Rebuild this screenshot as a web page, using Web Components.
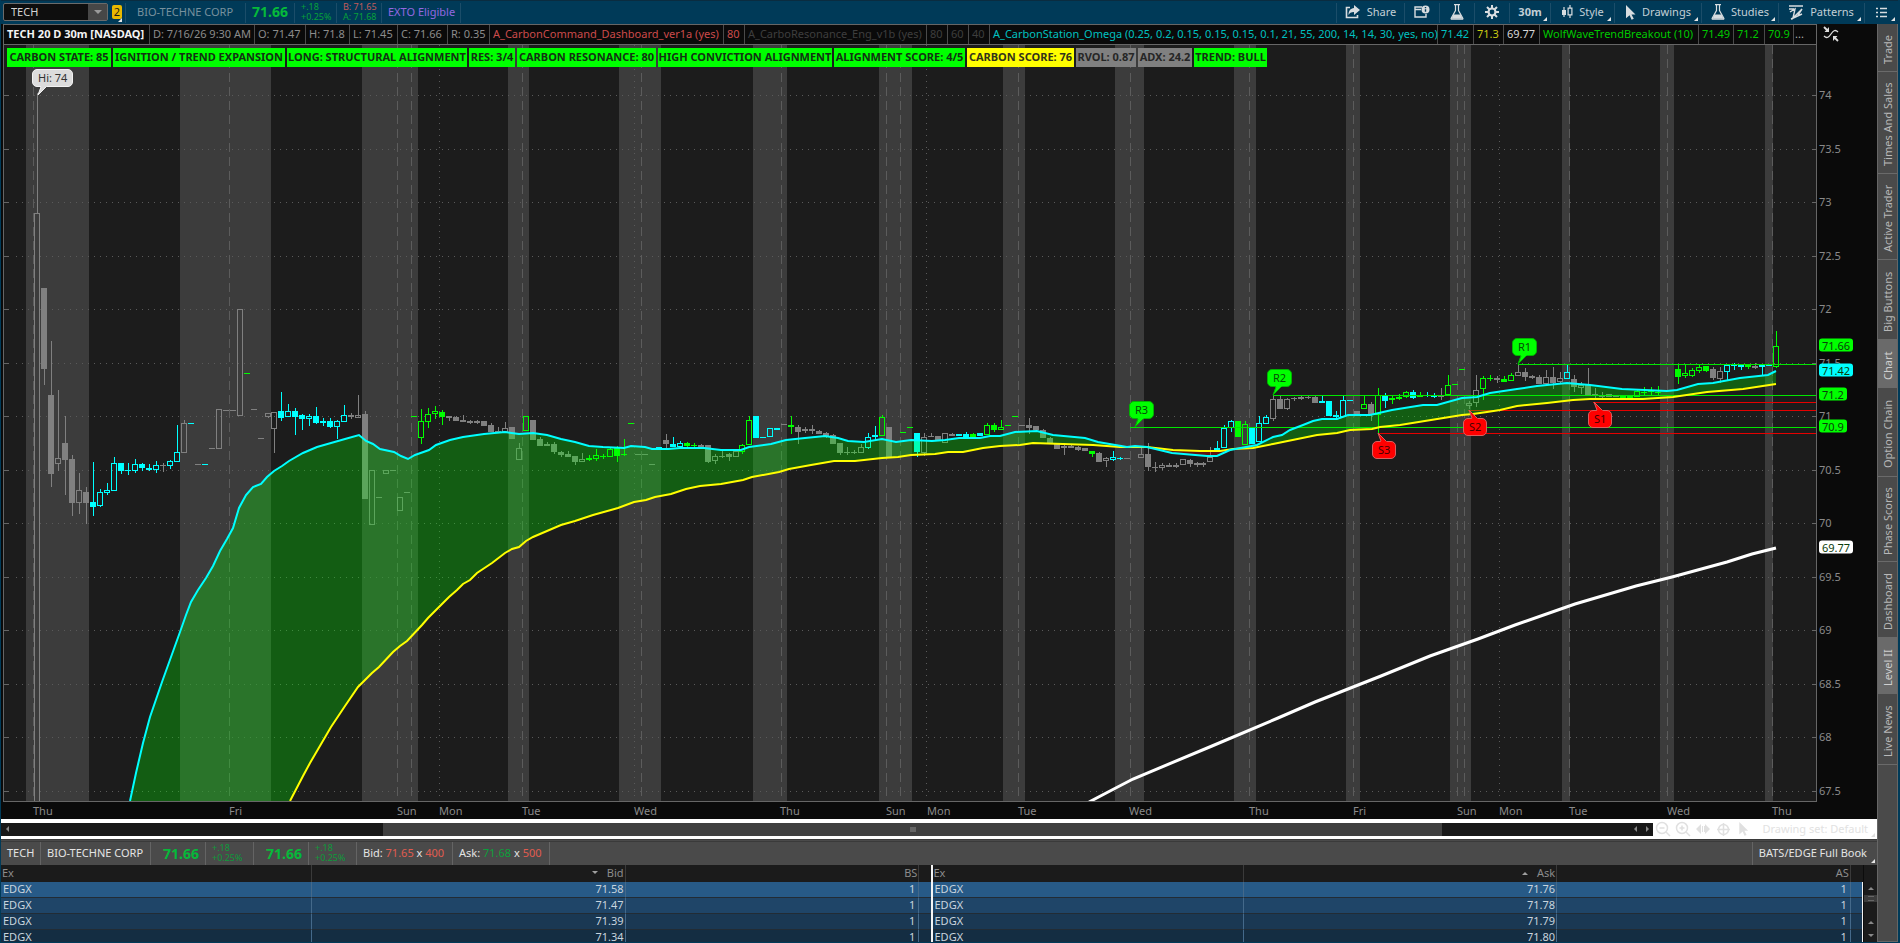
<!DOCTYPE html>
<html lang="en">
<head>
<meta charset="utf-8">
<title>TECH 20 D 30m</title>
<style>
  html, body { margin: 0; height: 100%; background: #003a58; }
  body { font: 11px/14px "Noto Sans", "Open Sans", sans-serif; color: #c8c8c8; overflow: hidden; }
</style>
</head>
<body>
<trade-app></trade-app>

<script>
const BASE = `
  *, *::before, *::after { box-sizing: border-box; }
  button, input { font: inherit; color: inherit; background: none; border: 0; margin: 0; padding: 0; }
  a { color: inherit; text-decoration: none; }
`;
function component(name, css, html) {
  customElements.define(name, class extends HTMLElement {
    connectedCallback() {
      if (this.shadowRoot) return;
      const root = this.attachShadow({ mode: 'open' });
      const t = document.createElement('template');
      t.innerHTML = `<style>${BASE}${css}</style>${typeof html === 'function' ? html(this) : html}`;
      root.append(t.content.cloneNode(true));
    }
  });
}

/* ---------- icons ---------- */
const ICONS = {
  share: `<svg width="16" height="14" viewBox="0 0 16 14"><path d="M9 0l6 5-6 5V7C6 7 4.500 8 3.500 10 3.500 6 5.500 3.300 9 3z" fill="#d8dde0"/><path d="M5 2.500H1.500v10h11V10" fill="none" stroke="#d8dde0" stroke-width="1.600"/></svg>`,
  alert: `<svg width="16" height="14" viewBox="0 0 16 14"><path d="M8 2H1v10h11V9M1 4.500h6" fill="none" stroke="#d8dde0" stroke-width="1.400"/><circle cx="11.500" cy="4.500" r="4" fill="#d8dde0"/><path d="M11.500 2v1.300M11.500 4.200v2.600" stroke="#003a58" stroke-width="1.400"/></svg>`,
  flask: `<svg width="14" height="16" viewBox="0 0 14 16"><path d="M4 .700h6M5.500 1v5.500L1.200 14.200q-.400 1 .6 1h10.400q1 0 .6-1L8.500 6.500V1" fill="none" stroke="#d8dde0" stroke-width="1.200"/><path d="M3.500 10.500h7l2 4.200h-11z" fill="#d8dde0"/></svg>`,
  gear: `<svg width="14" height="14" viewBox="0 0 14 14"><g stroke="#d8dde0" stroke-width="2"><path d="M7 0v14M0 7h14M2 2l10 10M12 2L2 12"/></g><circle cx="7" cy="7" r="4.500" fill="#d8dde0"/><circle cx="7" cy="7" r="2.400" fill="#003a58"/></svg>`,
  candles: `<svg width="12" height="14" viewBox="0 0 12 14"><path d="M3 2v10M9 0v3M9 10v3" stroke="#d8dde0" stroke-width="1.200"/><path d="M1 5h4v5H1z" fill="#d8dde0"/><path d="M7.100 3.100h3.800v6.800H7.100z" fill="none" stroke="#d8dde0" stroke-width="1.200"/></svg>`,
  arrow: `<svg width="11" height="15" viewBox="0 0 11 15"><path d="M1 0l9.500 9.500H6.500l2.300 4.300-2.200 1-2-4.500L1 13.300z" fill="#d8dde0"/></svg>`,
  pattern: `<svg width="15" height="15" viewBox="0 0 15 15"><path d="M0 1h14M0 4h5M1 7l5-3-2 9 9-9-4 6M2 14L13 9" fill="none" stroke="#d8dde0" stroke-width="1.400"/></svg>`,
  list: `<svg width="11" height="11" viewBox="0 0 11 11"><path d="M0 1.500h2M0 5.500h2M0 9.500h2M4 1.500h7M4 5.500h7M4 9.500h7" stroke="#d8dde0" stroke-width="1.600"/></svg>`
};

/* ---------- top bar ---------- */
component('tool-item', `
  :host { display: flex; position: relative; border-left: 1px solid #1b4d69; }
  button { display: flex; align-items: center; justify-content: center; gap: 6px; width: 100%; padding-bottom: 2px; color: #c3cfd6; }
  :host([bold]) button { font-weight: bold; }
  :host([menu])::after { content: ""; position: absolute; right: 3px; bottom: 2px; border: 2px solid; border-color: transparent #e6e6e6 #e6e6e6 transparent; }
`, el => `<button aria-label="${el.getAttribute('label')}">${ICONS[el.getAttribute('icon')] || ''}<slot></slot></button>`);

component('symbol-bar', `
  :host { display: flex; align-items: stretch; flex: none; height: 24px; padding: 2px 0 1px 2px; background: #003a58; border-top: 1px solid #0a2c40; box-sizing: border-box; }
  .symbol { display: flex; width: 105px; height: 18px; border: 1px solid #6b6b6b; border-radius: 2px; background: #0e0e0e; }
  input { flex: 1; min-width: 0; padding-left: 7px; color: #d4d4d4; outline: 0; }
  .drop { width: 19px; background: #474747; display: grid; place-items: center; }
  .drop i { border: 4px solid transparent; border-top-color: #9a9a9a; margin-top: 4px; }
  .link { position: relative; align-self: flex-start; width: 17px; padding: 2px 0 0 4px; border: 0; display: block; }
  .link b { display: block; width: 10px; height: 14px; border-radius: 2px; background: #e8b900; color: #1a1a1a; text-align: center; font-weight: normal; line-height: 14px; }
  .link::after { content: ""; position: absolute; right: 3px; top: 15px; border: 2px solid; border-color: transparent #e6e6e6 #e6e6e6 transparent; }
  .cell { display: flex; align-items: center; border-left: 1px solid #1b4d69; padding: 0 0 2px 6px; white-space: nowrap; }
  .name { width: 120px; padding-left: 11px; color: #77919e; }
  .last { width: 49px; font-weight: bold; font-size: 14px; color: #06b93a; }
  .stack { flex-direction: column; align-items: flex-start; justify-content: center; font-size: 9px; line-height: 10px; }
  .up { color: #08a03a; } .down { color: #c05a5a; }
  .exto { width: 80px; color: #9468e0; border-right: 1px solid #1b4d69; }
  .space { flex: 1; }
`, `
  <div class="symbol"><input aria-label="Symbol" value="TECH"><button class="drop" aria-label="Symbol list"><i></i></button></div>
  <button class="link" aria-label="Link colour"><b>2</b></button>
  <div class="cell name">BIO-TECHNE CORP</div>
  <div class="cell last">71.66</div>
  <div class="cell stack up" style="width:42px"><span>+.18</span><span>+0.25%</span></div>
  <div class="cell stack" style="width:45px"><span class="down">B: 71.65</span><span class="up">A: 71.68</span></div>
  <div class="cell exto">EXTO Eligible</div>
  <div class="space"></div>
  <tool-item icon="share" label="Share" style="width:68px">Share</tool-item>
  <tool-item icon="alert" label="Alerts" style="width:35px"></tool-item>
  <tool-item icon="flask" label="Quick study" style="width:35px"></tool-item>
  <tool-item icon="gear" label="Settings" style="width:35px"></tool-item>
  <tool-item bold menu label="30m" style="width:41px">30m</tool-item>
  <tool-item icon="candles" menu label="Style" style="width:64px">Style</tool-item>
  <tool-item icon="arrow" menu label="Drawings" style="width:87px">Drawings</tool-item>
  <tool-item icon="flask" menu label="Studies" style="width:77px">Studies</tool-item>
  <tool-item icon="pattern" menu label="Patterns" style="width:86px">Patterns</tool-item>
  <tool-item icon="list" menu label="Menu" style="width:34px"></tool-item>
`);

/* ---------- study strip ---------- */
const STUDIES = [
  ['TECH 20 D 30m [NASDAQ]', '#f4f4f4', 146], ['D: 7/16/26 9:30 AM', '#8c8c8c', 105], ['O: 71.47', '#8c8c8c', 51], ['H: 71.8', '#8c8c8c', 44],
  ['L: 71.45', '#8c8c8c', 48], ['C: 71.66', '#8c8c8c', 50], ['R: 0.35', '#8c8c8c', 42],
  ['A_CarbonCommand_Dashboard_ver1a (yes)', '#cc4b4b', 234], ['80', '#cc4b4b', 21],
  ['A_CarboResonance_Eng_v1b (yes)', '#3e3e3e', 182], ['80', '#3e3e3e', 21], ['60', '#3e3e3e', 21], ['40', '#3e3e3e', 21],
  ['A_CarbonStation_Omega (0.25, 0.2, 0.15, 0.15, 0.15, 0.1, 21, 55, 200, 14, 14, 30, yes, no)', '#00c0c0', 448],
  ['71.42', '#00c0c0', 36], ['71.3', '#c8c814', 30], ['69.77', '#d8d8d8', 36],
  ['WolfWaveTrendBreakout (10)', '#00c800', 159], ['71.49', '#00c800', 35], ['71.2', '#00c800', 31], ['70.9', '#00c800', 29], ['...', '#b0b0b0', 0]
];
component('study-strip', `
  :host { display: flex; flex: none; height: 21px; overflow: hidden; background: #0a0a0a; border-top: 1px solid #666; border-bottom: 1px solid #666; box-sizing: border-box; }
  span { flex: none; padding-left: 3px; line-height: 18px; white-space: nowrap; border-right: 1px solid #4a4a4a; }
  span:first-of-type { font-weight: bold; }
  span:last-of-type { border: 0; padding-left: 1px; }
`, () => STUDIES.map(([t, c, w]) => `<span style="color:${c};${w ? `width:${w}px` : ''}">${t}</span>`).join(''));

component('status-labels', `
  :host { display: flex; gap: 2px; }
  span { flex: none; height: 19px; line-height: 18px; text-align: center; font-weight: bold; white-space: nowrap; background: #0f0; color: #133213; }
  .y { background: #ff0; color: #33331a; } .g { background: #808080; color: #262626; }
`, () => [
  ['CARBON STATE: 85', 104], ['IGNITION / TREND EXPANSION', 172], ['LONG: STRUCTURAL ALIGNMENT', 180], ['RES: 3/4', 46], ['CARBON RESONANCE: 80', 139],
  ['HIGH CONVICTION ALIGNMENT', 174], ['ALIGNMENT SCORE: 4/5', 131], ['CARBON SCORE: 76', 107, 'y'], ['RVOL: 0.87', 60, 'g'], ['ADX: 24.2', 54, 'g'], ['TREND: BULL', 73]
].map(([t, w, k]) => `<span class="${k || ''}" style="width:${w}px">${t}</span>`).join(''));

/* ---------- chart ---------- */
const VIEW = { x: 4, y: 45, w: 1812, h: 756 };
const BANDS = [[26,89],[180,271],[362,418],[508,529],[619,661],[753,787],[879,912],[1003,1025],[1115,1144],[1234,1256],[1346,1360],[1450,1471],[1562,1570],[1660,1674],[1765,1773]];
const DASHED = [33,229,397,411,522,641,781,886,900,1018,1130,1249,1353,1457,1464,1569,1667,1772];
const DOTTED = [439,634,926,1499];
/* index, colour (g grey, c cyan, l lime), kind (h hollow, f filled, d dash), high, top, bottom, low */
const CANDLES = `
0gh 93 213 830 830|1gf 288 288 369 385|2gf 341 395 474 487|3gh 390 458 464 471|4gf 416 443 460 495|5gf 455 459 503 516|6gh 473 490 503 514|7gf 487 492 503 524
8cf 462 502 507 516|9ch 489 492 506 507|10ch 483 490 493 495|11ch 457 463 491 491|12cf 463 463 471 474|13cf 463 470 471 475|14ch 459 464 471 473|15cf 463 464 468 471|16cf 464 468 470 471|17ch 461 465 470 473|18gf 463 465 466 472|19ch 460 461 466 469|20ch 425 452 462 462|21gh 420 423 453 453
22cd 423|23gd 464|24cd 464|25gd 448|26gh 409 409 449 449|27gd 410|28gd 410|29gh 309 309 416 416|30ld 373|31gd 409|32gd 438|33gh 413 413 417 418|34gh 412 412 429 453
35cf 392 411 418 421|36ch 404 411 417 417|37cf 408 411 417 435|38cf 414 415 419 430|39ch 414 416 419 426|40cf 407 416 423 424|41cf 418 421 423 426|42cf 418 421 427 428|43ch 420 421 427 439|44ch 405 415 422 422|45gf 413 415 417 419|46gh 395 415 418 418|47gf 411 414 499 499
48gh 470 470 525 525|49gd 497|50gh 470 470 474 474|51gd 470|52gh 497 497 511 511|53gd 492|54ld 416|55lh 409 421 438 444|56lh 408 414 422 428|57lh 406 411 414 419|58lf 410 412 417 425|59gf 416 416 418 421|60gf 416 417 421 421|61gf 415 420 422 422|62gf 420 421 423 424|63gf 420 421 423 424
64gf 421 421 426 426|65gf 423 425 432 432|66gf 427 431 432 432|67gh 422 428 432 432|68gf 427 427 439 439|69gh 443 448 460 460|70lh 416 416 431 431|71gf 420 420 440 440|72gf 437 439 446 446|73gf 442 444 446 446|74gf 442 444 452 454|75gf 451 452 455 457|76gf 451 454 457 457|77gf 456 456 462 465|78gh 453 459 462 462|79lf 455 458 460 461|80lh 449 455 459 461|81lf 454 456 457 459|82lh 448 449 457 457|83lf 446 448 456 462|84lf 439 454 455 456|85ld 423|86gd 454|87gd 454|88gd 464
89cf 447 447 450 450|90gf 434 440 444 448|91cf 437 444 447 447|92ch 441 443 447 447|93lf 442 443 446 447|94lf 443 445 446 447|95gf 444 445 447 447|96gf 445 445 462 463|97gh 454 456 461 464|98gf 450 456 457 458|99gf 453 454 457 461|100gh 449 451 457 457|101lh 444 445 452 454|102lh 416 420 445 445|103cf 416 416 438 438|104cd 437|105ch 428 428 437 437|106cf 428 428 430 430|107gd 424|108lf 416 425 427 434|109gf 425 427 432 444|110gh 427 429 431 433|111gf 425 429 431 434|112gf 430 431 434 434|113gf 432 433 436 438|114gf 434 435 444 444|115gf 443 443 453 455|116gf 447 452 453 455|117gf 450 452 453 454|118gh 444 447 453 453|119ch 433 437 448 449|120cf 426 435 437 440|121lh 415 417 436 436|122gf 427 427 457 457|124ld 432|125ld 427|126cf 433 433 452 457|127gh 433 437 453 456|128gf 433 436 437 437|129gf 436 436 440 440|130gh 433 433 443 443|131gf 433 434 436 436
132cf 434 434 436 436|133cf 432 434 437 438|134lf 433 434 437 437|135cf 433 433 436 436|136lh 423 425 435 435|137lf 423 425 430 432|138lh 420 427 430 430|139ld 425|140ld 416|141gd 425|142gf 418 425 428 434|143gf 426 426 430 430|144gf 429 430 438 438|145gf 437 438 444 444|146gf 444 444 449 449|147gh 443 446 448 455|148gf 445 446 448 448|149gf 446 447 450 451|150gf 448 448 451 451|151lf 451 451 454 457|152gf 452 453 462 462|153gh 457 458 461 467|154ch 451 457 460 461|155cf 457 458 459 460|156gd 458|158gh 446 454 458 458|159gf 443 454 467 471|160gf 462 467 468 472|161gh 463 465 468 470|162gf 463 465 467 467|163gh 463 465 467 468|164gh 459 459 465 465|165gf 459 460 464 467|166gf 462 463 465 467|167gh 462 463 465 467|168gh 447 457 462 462|169ch 441 448 450 450|170ch 425 428 448 448|171ch 420 421 428 432|172lf 421 421 437 437|173lh 421 424 445 445|174cf 427 427 444 444|175ch 416 423 442 442|176ch 415 417 424 424|177gh 396 399 419 421|178gf 395 399 409 409|179gh 398 399 409 410|180gf 397 398 399 401|181gf 396 397 399 400|182gf 396 397 398 399|183gf 395 397 403 403|184cf 396 401 403 403|185cf 401 401 416 416|186cf 411 415 417 418|187ch 396 400 417 417|188cd 400|189gf 411 411 414 414|190lh 396 404 409 409|191gf 402 404 414 421
192lh 388 395 415 433|193cf 393 395 401 408|194lf 396 398 400 404|195lf 394 397 399 400|196lh 391 392 397 398|197cf 390 392 398 399|198lh 392 395 397 397|199cf 392 395 396 397|200cf 393 395 397 398|201gf 388 395 397 400|202lh 375 385 395 395|203ld 384|204ld 369|205gh 401 403 406 409|206gh 375 390 403 407|207lh 376 378 389 400|208lf 375 378 379 381|209gf 376 378 380 383|210lf 376 379 382 382|211lh 373 375 381 381|212gh 365 372 376 376|213gf 368 372 377 381|214gf 375 376 378 379|215gf 375 377 384 384|216gh 370 377 384 385|217gf 367 377 383 389|218gh 372 378 382 384|219ch 365 372 379 379|220gf 375 379 387 392|221gh 382 385 388 394|222gf 368 385 395 395|223gf 388 394 396 399|224gf 392 396 397 398|225gf 394 394 397 397|226gf 396 396 397 397|227lf 395 396 398 398|228lf 395 396 398 398|229lh 389 391 397 397|230lf 387 392 393 395|231lf 387 391 392 395|232lf 386 392 393 395|235lf 365 369 377 384|236lh 365 373 376 378|237lh 368 370 376 377|238lh 365 367 371 373|239lf 366 366 371 372|240gf 367 369 378 380|241gh 367 371 379 383|242ch 365 365 372 380|243cf 363 365 366 370|244cf 364 365 367 370|245lf 364 365 367 369|246gf 363 366 368 369|247ch 364 365 367 376|248cd 365|249lh 331 346 367 368`;
const FAST = '130,801 136,773 143,743 150,717 162,682 171,657 180,632 186,615 191,602 198,590 206,578 213,566 220,551 227,539 233,528 239,508 246,495 253,487 261,484 267,477 274,471 282,466 289,461 303,453 317,447 331,443 345,439 359,435 366,441 373,444 380,449 394,452 401,456 408,459 415,455 429,450 436,445 450,440 463,437 484,434 505,432 519,434 533,433 547,435 561,439 575,442 589,446 603,447 624,448 631,446 645,447 652,449 668,449 680,448 704,448 721,450 741,450 749,447 771,444 786,440 805,438 825,436 838,438 848,441 864,442 882,439 896,442 911,440 932,441 945,440 959,438 980,438 990,436 1000,436 1015,432 1037,431 1053,435 1085,438 1098,442 1127,447 1135,446 1147,447 1172,453 1207,456 1217,456 1230,450 1257,445 1273,437 1282,435 1290,430 1303,425 1313,421 1322,419 1337,419 1348,415 1370,415 1392,410 1423,405 1437,405 1462,398 1477,397 1490,393 1517,389 1537,386 1567,383 1590,385 1622,389 1667,391 1677,390 1698,384 1713,383 1740,378 1768,375 1776,371';
const SLOW = '290,801 303,776 310,763 317,751 331,727 345,706 358,687 372,673 379,667 393,652 400,646 407,641 422,625 428,618 441,605 449,597 457,590 463,584 470,580 477,573 492,563 505,553 512,549 519,547 526,541 533,537 547,531 561,525 575,521 593,515 618,508 634,502 646,500 655,497 671,494 686,489 700,486 721,484 743,480 752,477 779,472 789,469 811,465 834,461 855,461 882,458 898,457 911,455 935,454 948,452 963,452 983,448 1000,446 1020,445 1033,443 1093,445 1120,447 1147,447 1173,450 1200,451 1220,451 1233,449 1253,448 1273,444 1317,435 1337,433 1350,430 1372,429 1380,427 1400,425 1462,415 1473,414 1487,412 1500,410 1517,406 1547,403 1573,400 1590,399 1643,399 1673,397 1707,392 1743,389 1776,384';
const LONG = '1089,802 1110,791 1133,779 1212,746 1278,718 1315,702 1381,676 1430,656 1478,639 1515,625 1575,604 1636,586 1672,577 1727,562 1752,554 1776,548';
const LEVELS = [[1518,364,'#00e600'],[1273,395,'#00e600'],[1130,427,'#00e600'],[1593,402,'#e60000'],[1468,410,'#e60000'],[1378,433,'#e60000']];
const PRICES = [['74',95],['73.5',149],['73',202],['72.5',256],['72',309],['71.5',363],['71',416],['70.5',470],['70',523],['69.5',577],['69',630],['68.5',684],['68',737],['67.5',791]];

function plotMarkup() {
  const { x, y, w, h } = VIEW, right = x + w, bottom = y + h;
  const colours = { g: '#808080', c: '#00ffff', l: '#00ff00' };
  let s = '';
  for (const [a, b] of BANDS) s += `<rect x="${a}" y="${y}" width="${b - a}" height="${h}" fill="#3c3c3c"/>`;
  for (const [, py] of PRICES) {
    s += `<path d="M${x + 12} ${py + .5}H${right - 10}" stroke="#5a5a5a" stroke-dasharray="1 5"/>`;
    s += `<path d="M${x} ${py + .5}h5M${right - 4} ${py + .5}h4" stroke="#666"/>`;
  }
  for (const vx of DASHED) s += `<path d="M${vx + .5} ${y}V${bottom}" stroke="#5c5c5c" stroke-dasharray="9 5"/>`;
  for (const vx of DOTTED) s += `<path d="M${vx + .5} ${y}V${bottom}" stroke="#5a5a5a" stroke-dasharray="1 5"/>`;
  for (const item of CANDLES.trim().split(/[|\n]/)) {
    const [, i, c, k, rest] = item.match(/^(\d+)([gcl])([hfd]) (.*)$/);
    const cx = 37 + Math.round(i * 6.985), col = colours[c], v = rest.split(' ').map(Number);
    if (k === 'd') { s += `<rect x="${cx - 3}" y="${v[0]}" width="6" height="1" fill="${col}"/>`; continue; }
    const [hi, top, bot, lo] = v;
    if (top > hi) s += `<rect x="${cx}" y="${hi}" width="1" height="${top - hi}" fill="${col}"/>`;
    if (lo > bot) s += `<rect x="${cx}" y="${bot}" width="1" height="${lo - bot}" fill="${col}"/>`;
    s += k === 'f'
      ? `<rect x="${cx - 3}" y="${top}" width="6" height="${bot - top}" fill="${col}"/>`
      : `<rect x="${cx - 2.5}" y="${top + .5}" width="5" height="${Math.max(bot - top - 1, 1)}" fill="none" stroke="${col}"/>`;
  }
  for (const [lx, ly, c] of LEVELS) s += `<path d="M${lx} ${ly + .5}H${right}" stroke="${c}"/>`;
  const fast = FAST.split(' '), slow = SLOW.split(' ');
  const part = (list, a, b) => list.filter(p => { const n = parseFloat(p); return n >= a && n <= b; });
  const cloud = (a, b, c) => `<polygon points="${part(fast, a, b).join(' ')} ${part(slow, a, b).reverse().join(' ')}" fill="${c}" fill-opacity=".29"/>`;
  let lines = cloud(0, 1127, '#00ff00') + cloud(1147, 1233, '#ff0000') + cloud(1233, 1800, '#00ff00');
  lines += `<polyline points="${SLOW}" stroke="#ffff00" stroke-width="2" fill="none"/>`;
  lines += `<polyline points="${FAST}" stroke="#00ffff" stroke-width="2" fill="none"/>`;
  lines += `<polyline points="${LONG}" stroke="#fff" stroke-width="3" fill="none"/>`;
  return `<svg viewBox="${x} ${y} ${w} ${h}" preserveAspectRatio="none" aria-hidden="true"><g shape-rendering="crispEdges">${s}</g>${lines}</svg>`;
}

component('chart-callout', `
  :host { position: absolute; display: block; }
  .box { position: relative; height: 18px; padding: 0 5px; border-radius: 5px; white-space: nowrap; background: var(--fill); border: 1px solid var(--edge); line-height: 16px; color: var(--ink); }
  svg { position: absolute; left: 5px; top: 16px; overflow: visible; }
  :host([up]) svg { top: auto; bottom: 16px; }
`, el => `<div class="box"><slot></slot>` + (el.hasAttribute('up')
  ? `<svg width="9" height="9"><path d="M0 0L3 9H9z" fill="var(--fill)"/><path d="M3 8L0 0l8 8" fill="none" stroke="var(--edge)"/></svg>`
  : `<svg width="9" height="9"><path d="M0 9L3 0H9z" fill="var(--fill)"/><path d="M3 1L0 9l8-8" fill="none" stroke="var(--edge)"/></svg>`) + `</div>`);

const CALLOUTS = [['Hi: 74',32,69,'n'],['R1',1512,338,'r'],['R2',1267,369,'r'],['R3',1129,401,'r'],['S3',1372,441,'s'],['S2',1463,418,'s'],['S1',1588,410,'s']];
component('price-plot', `
  :host { display: block; position: relative; overflow: hidden; background: #1c1c1c; min-height: 0; }
  svg { position: absolute; inset: 0; width: 100%; height: 100%; }
  status-labels { position: relative; padding: 3px; }
  .n { --fill: #dcdcdc; --edge: #f2f2f2; --ink: #333; }
  .r { --fill: #00ff00; --edge: #00b400; --ink: #064b06; }
  .s { --fill: #ff0000; --edge: #d86060; --ink: #400; }
`, () => plotMarkup() + `<status-labels></status-labels>` + CALLOUTS.map(([t, cx, cy, k]) =>
  `<chart-callout class="${k}" ${k === 's' ? 'up' : ''} style="left:${(cx - VIEW.x) / VIEW.w * 100}%;top:${(cy - VIEW.y) / VIEW.h * 100}%">${t}</chart-callout>`).join(''));

component('price-axis', `
  :host { display: block; position: relative; background: #0a0a0a; }
  .swap { position: absolute; left: 6px; top: 2px; width: 16px; height: 16px; }
  .scale { position: absolute; inset: 21px 0 1px 0; }
  span { position: absolute; left: 2px; transform: translateY(-50%); color: #8a8a8a; }
  .tag { padding: 0 3px; line-height: 13px; border-radius: 3px; color: #0b3d0b; background: #0f0; }
`, () => `<button class="swap" aria-label="Swap scale"><svg width="16" height="16" viewBox="0 0 16 16"><path d="M1 10C4 13 6 11 8 8S12 3 15 6" fill="none" stroke="#ddd" stroke-width="1.300"/><path d="M1 1l4 4M15 15l-4-4" stroke="#ddd" stroke-width="1.800"/><path d="M6 6V1L1.500 6zM10 10v5l4.500-5z" fill="#ddd"/></svg></button><div class="scale">`
  + PRICES.map(([t, y]) => `<span style="top:${(y - VIEW.y) / VIEW.h * 100}%">${t}</span>`).join('')
  + [['71.66', 345, '#0f0'], ['71.42', 370, '#0ff'], ['71.2', 394, '#0f0'], ['70.9', 426, '#0f0'], ['69.77', 547, '#fff']].map(([t, y, c]) =>
    `<span class="tag" style="top:${(y - VIEW.y) / VIEW.h * 100}%;background:${c}">${t}</span>`).join('') + `</div>`);

component('time-axis', `
  :host { display: block; position: relative; height: 17px; background: #0a0a0a; color: #8a8a8a; }
  span { position: absolute; top: 2px; }
`, () => [['Thu',33],['Fri',229],['Sun',397],['Mon',439],['Tue',522],['Wed',634],['Thu',780],['Sun',886],['Mon',927],['Tue',1018],['Wed',1129],['Thu',1249],['Fri',1353],['Sun',1457],['Mon',1499],['Tue',1569],['Wed',1667],['Thu',1772]]
  .map(([t, x]) => `<span style="left:${(x - VIEW.x) / VIEW.w * 100}%">${t}</span>`).join(''));

component('chart-panel', `
  :host { display: grid; grid-template: minmax(0, 1fr) auto / minmax(0, 1fr) 60px; padding-left: 2px; background: #0a0a0a; min-height: 0; }
  .main { display: flex; flex-direction: column; min-height: 0; min-width: 0; border: 1px solid #666; border-top: 0; }
  price-plot { flex: 1; }
  time-axis { margin: 0 1px; }
`, `
  <div class="main"><study-strip></study-strip><price-plot></price-plot></div>
  <price-axis></price-axis>
  <time-axis></time-axis>
`);

/* ---------- scroll row ---------- */
component('chart-scroll', `
  :host { display: flex; align-items: center; flex: none; height: 20px; background: #fff; color: #e2e2e2; }
  .bar { flex: 1; display: flex; height: 13px; background: #181818; }
  .bar button { display: grid; place-items: center; flex: none; width: 12px; }
  .thumb { display: grid; place-items: center; background: #404040; width: 64.1%; margin: 0 auto 0 22.4%; }
  .thumb i { width: 6px; height: 5px; background: #666; }
  .tools { display: flex; align-items: center; width: 224px; }
  .tools button { width: 20px; height: 18px; display: grid; place-items: center; flex: none; }
  .tools .set { position: relative; display: block; flex: 1; text-align: right; padding-right: 9px; }
  .set::after { content: ""; position: absolute; right: 2px; bottom: 1px; border: 2px solid; border-color: transparent #ddd #ddd transparent; }
`, `
  <div class="bar">
    <button aria-label="Scroll left"><svg width="3" height="6"><path d="M3 0v6L0 3z" fill="#888"/></svg></button>
    <div class="thumb"><i></i></div>
    <button aria-label="Back"><svg width="3" height="6"><path d="M3 0v6L0 3z" fill="#888"/></svg></button>
    <button aria-label="Forward"><svg width="3" height="6"><path d="M0 0v6l3-3z" fill="#888"/></svg></button>
  </div>
  <div class="tools">
    <button aria-label="Zoom out"><svg width="16" height="16" fill="none" stroke="#e0e0e0" stroke-width="1.500"><circle cx="7" cy="7" r="5.500"/><path d="M11 11l4 4M4.500 7h5"/></svg></button>
    <button aria-label="Zoom in"><svg width="16" height="16" fill="none" stroke="#e0e0e0" stroke-width="1.500"><circle cx="7" cy="7" r="5.500"/><path d="M11 11l4 4M4.500 7h5M7 4.500v5"/></svg></button>
    <button aria-label="Pan"><svg width="14" height="10"><path d="M5 0v10L0 5zM9 0v10l5-5zM6 2h1v6H6zM8 2h1v6H8z" fill="#e0e0e0"/></svg></button>
    <button aria-label="Crosshair"><svg width="13" height="13" fill="none" stroke="#e0e0e0" stroke-width="1.500"><circle cx="6.500" cy="6.500" r="5"/><path d="M6.500 0v13M0 6.500h13"/></svg></button>
    <button aria-label="Pointer"><svg width="11" height="14" viewBox="0 0 11 15"><path d="M1 0l9.500 9.500H6.500l2.300 4.300-2.200 1-2-4.500L1 13.300z" fill="#e0e0e0"/></svg></button>
    <button class="set">Drawing set: Default</button>
  </div>
`);

/* ---------- quote bar ---------- */
component('quote-bar', `
  :host { display: flex; flex: none; height: 26px; box-sizing: border-box; background: #4a4a4a; border-top: 3px double #3a3a3a; color: #e4e4e4; }
  div { display: flex; align-items: center; border-right: 1px solid #646464; padding: 0 6px 2px; white-space: pre; }
  .last { width: 55px; justify-content: flex-end; padding-bottom: 0; font-weight: bold; font-size: 14px; color: #06b93a; }
  .chg { width: 48px; flex-direction: column; align-items: flex-start; justify-content: center; font-size: 9px; line-height: 10px; color: #0d9a3a; }
  .r { color: #e05c50; } .g { color: #0aa03c; }
  .space { flex: 1; border: 0; }
  button { position: relative; padding: 0 10px 2px 6px; border-left: 1px solid #646464; }
  button::after { content: ""; position: absolute; right: 2px; bottom: 2px; border: 2px solid; border-color: transparent #e6e6e6 #e6e6e6 transparent; }
`, `
  <div style="width:40px">TECH</div><div style="width:110px">BIO-TECHNE CORP</div>
  <div class="last">71.66</div><div class="chg"><span>+.18</span><span>+0.25%</span></div>
  <div class="last">71.66</div><div class="chg"><span>+.18</span><span>+0.25%</span></div>
  <div style="width:96px">Bid: <span class="r">71.65</span> x <span class="r">400</span></div>
  <div style="width:97px">Ask: <span class="g">71.68</span> x <span class="r">500</span></div>
  <div class="space"></div>
  <button>BATS/EDGE Full Book</button>
`);

/* ---------- depth tables ---------- */
component('depth-table', `
  :host { display: block; flex: 1; min-width: 0; background: #1b1b1b; }
  table { width: 100%; table-layout: fixed; border-collapse: separate; border-spacing: 0; }
  col:nth-child(1) { width: 33.5%; } col:nth-child(2) { width: 33.7%; } col:nth-child(3) { width: 31.6%; }
  th, td { padding: 0 1px; text-align: right; vertical-align: top; }
  th { height: 17px; font-weight: normal; color: #8c8c8c; line-height: 15px; border-right: 1px solid #3a3a3a; }
  th:first-child, td:first-child { text-align: left; padding-left: 2px; }
  th:first-child { padding-left: 1px; }
  td { height: 16px; line-height: 13px; color: #c8d4de; border-right: 1px solid #44698a; border-bottom: 1px solid #222c35; }
  th:last-child, td:last-child { border-right: 0; }
  td:nth-child(3) { padding-right: 3px; }
  tr:nth-child(1) td { background: #275a87; } tr:nth-child(2) td { background: #1f4568; }
  tr:nth-child(3) td { background: #1a3853; } tr:nth-child(4) td { background: #142d42; }
  i { display: inline-block; border: 3px solid transparent; margin-right: 9px; }
  .desc { border-top-color: #a0a0a0; border-bottom: 0; vertical-align: 3px; } .asc { border-bottom-color: #a0a0a0; border-top: 0; vertical-align: 2px; }
`, el => {
  const ask = el.getAttribute('side') === 'ask';
  const rows = ask ? ['71.76', '71.78', '71.79', '71.80'] : ['71.58', '71.47', '71.39', '71.34'];
  return `<table><colgroup><col><col><col><col></colgroup><thead><tr><th>Ex</th><th><i class="${ask ? 'asc' : 'desc'}"></i>${ask ? 'Ask' : 'Bid'}</th><th>${ask ? 'AS' : 'BS'}</th><th></th></tr></thead><tbody>`
    + rows.map(p => `<tr><td>EDGX</td><td>${p}</td><td>1</td><td></td></tr>`).join('') + `</tbody></table>`;
});

component('level-two', `
  :host { display: flex; flex: none; height: 77px; overflow: hidden; background: #1b1b1b; }
  .rule { width: 2px; background: #f4f4f4; }
  .end { width: 1px; margin-top: 17px; background: #f4f4f4; }
  .bar { width: 14px; padding-top: 17px; border-left: 1px solid #0c0c0c; display: flex; flex-direction: column; align-items: stretch; }
  .bar button { height: 13px; display: grid; place-items: center; }
  .thumb { height: 7px; margin-bottom: 14px; background: #3c3c3c; display: grid; place-items: center; }
  .thumb i { width: 6px; height: 5px; border: solid #666; border-width: 1px 0; }
`, `
  <depth-table side="bid"></depth-table><div class="rule"></div><depth-table side="ask"></depth-table><div class="end"></div>
  <div class="bar">
    <button aria-label="Row up"><svg width="6" height="3"><path d="M0 3h6L3 0z" fill="#888"/></svg></button>
    <div class="thumb"><i></i></div>
    <button aria-label="Page up"><svg width="6" height="3"><path d="M0 3h6L3 0z" fill="#888"/></svg></button>
    <button aria-label="Page down"><svg width="6" height="3"><path d="M0 0h6L3 3z" fill="#888"/></svg></button>
  </div>
`);

/* ---------- side tabs ---------- */
component('side-tabs', `
  :host { display: flex; flex-direction: column; width: 21px; box-sizing: border-box; background: #4a4a4a; border: 1px solid #666; border-top: 0; }
  a { display: block; flex: none; writing-mode: vertical-rl; transform: rotate(180deg); width: 19px; padding-bottom: 4px; text-align: center; line-height: 19px; color: #b8b8b8; border-top: 1px solid #6a6a6a; white-space: nowrap; }
  a.on { background: #6a6a6a; color: #cfcfcf; }
`, () => [['Trade', 48], ['Times And Sales', 102], ['Active Trader', 86], ['Big Buttons', 80], ['Chart', 48], ['Option Chain', 89], ['Phase Scores', 85], ['Dashboard', 76], ['Level II', 56], ['Live News', 71]]
  .map(([t, h]) => `<a href="#" style="height:${h}px" class="${t === 'Chart' || t === 'Level II' ? 'on' : ''}">${t}</a>`).join(''));

component('trade-app', `
  :host { display: flex; flex-direction: column; box-sizing: border-box; height: 100vh; padding: 0 2px 1px 1px; }
  .body { flex: 1; min-height: 0; display: flex; }
  .left { flex: 1; min-width: 0; display: flex; flex-direction: column; }
  chart-panel { flex: 1; }
`, `
  <symbol-bar></symbol-bar>
  <div class="body">
    <div class="left">
      <chart-panel></chart-panel>
      <chart-scroll></chart-scroll>
      <quote-bar></quote-bar>
      <level-two></level-two>
    </div>
    <side-tabs></side-tabs>
  </div>
`);
</script>
</body>
</html>
